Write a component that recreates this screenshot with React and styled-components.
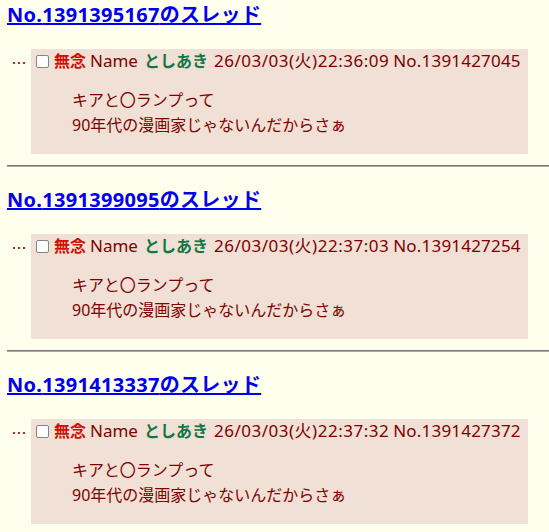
import React from 'react';
import styled, { createGlobalStyle } from 'styled-components';

const GlobalStyle = createGlobalStyle`
body {
  margin: 0;
  background: #ffffee;
  color: #800000;
  font-family: "Noto Sans", "Noto Sans CJK JP", sans-serif;
}
`

const Page = styled.div`
padding: 0 0 0 7px;
`
const Section = styled.section`
padding-top: 2px;
`
const Title = styled.a`
display: inline-block;
font-size: 20px;
font-weight: bold;
letter-spacing: 0.3px;
line-height: 26px;
color: #0000ee;
text-decoration: underline;
`
const Row = styled.div`
display: flex;
align-items: flex-start;
margin-top: 21px;
padding-right: 21px;
`
const Dots = styled.div`
width: 24px;
padding-top: 3px;
font-family: "Noto Sans CJK JP", sans-serif;
font-size: 15px;
line-height: 22px;
text-align: center;
`
const Reply = styled.div`
flex: 1;
background: #f0e0d6;
padding: 1px 6px 16px 4px;
`
const Header = styled.div`
display: flex;
align-items: center;
gap: 4px;
font-size: 16px;
line-height: 22px;
white-space: nowrap;
`
const Check = styled.span`
width: 11px;
height: 11px;
border: 1px solid #858585;
border-radius: 2px;
background: #fff;
margin: 0 1px 0 1px;
`
const Subject = styled.b`
color: #cc1105;
`
const Latin = styled.span`
font-size: 17px;
letter-spacing: ${p => p.$spacing || 0}px;
margin-right: ${p => p.$gap || 0}px;
`
const Name = styled.b`
color: #117743;
margin-right: 2px;
`
const Body = styled.blockquote`
margin: 16px 0 0 37px;
font-size: 16px;
line-height: 25px;
`
const Rule = styled.hr`
margin: 11px 0 18px;
border: 0;
border-top: 1px solid #777;
border-bottom: 1px solid #aaa;
`

const threads = [
  { id: '1391395167', no: '1391427045', time: '22:36:09' },
  { id: '1391399095', no: '1391427254', time: '22:37:03' },
  { id: '1391413337', no: '1391427372', time: '22:37:32' },
]

const Thread = ({ t, last }) => (
  <>
    <Section>
      <Title href="#">No.{t.id}のスレッド</Title>
      <Row>
        <Dots>…</Dots>
        <Reply>
          <Header>
            <Check />
            <Subject>無念</Subject>
            <Latin $gap={2}>Name</Latin>
            <Name>としあき</Name>
            <Latin $spacing={0.5}>26/03/03(火){t.time}</Latin>
            <Latin $spacing={0.2}>No.{t.no}</Latin>
          </Header>
          <Body>
            キアと〇ランプって<br />
            90年代の漫画家じゃないんだからさぁ
          </Body>
        </Reply>
      </Row>
    </Section>
    {!last && <Rule />}
  </>
)

const App = () => (
  <Page>
    <GlobalStyle />
    {threads.map((t, i) => (
      <Thread key={t.id} t={t} last={i === threads.length - 1} />
    ))}
  </Page>
)

export default App;
